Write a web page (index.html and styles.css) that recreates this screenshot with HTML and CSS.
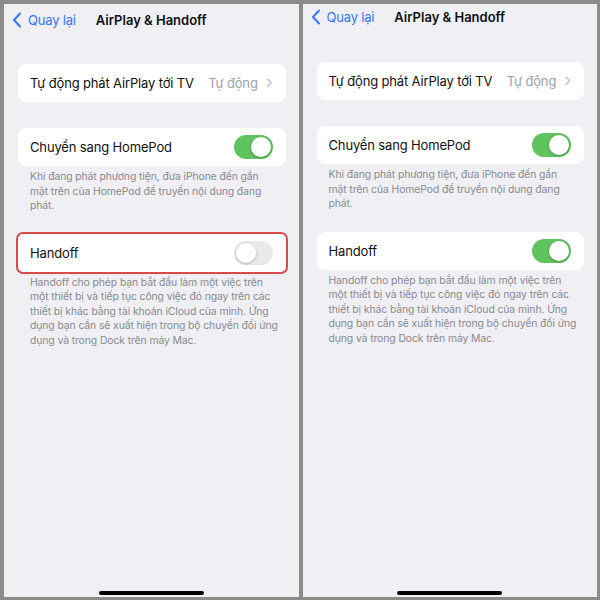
FILE: index.html
```html
<!DOCTYPE html>
<html lang="vi">
<head>
    <meta charset="UTF-8">
    <meta name="viewport" content="width=device-width, initial-scale=1.0">
    <title>AirPlay &amp; Handoff</title>
    <link rel="stylesheet" href="styles.css">
</head>
<body>
    <div class="compare">
        <!-- Before: Handoff off -->
        <div class="phone">
            <div class="nav">
                <a class="back">
                    <svg width="10" height="16" viewBox="0 0 10 16"><path d="M8 1.5 L2 8 L8 14.5" fill="none" stroke="#3478f6" stroke-width="2" stroke-linecap="round" stroke-linejoin="round"/></svg>
                    <span>Quay lại</span>
                </a>
                <div class="title">AirPlay &amp; Handoff</div>
            </div>

            <div class="cell">
                <span class="label">Tự động phát AirPlay tới TV</span>
                <span class="value">Tự động <span class="chev">›</span></span>
            </div>

            <div class="cell group">
                <span class="label">Chuyển sang HomePod</span>
                <span class="switch on"></span>
            </div>
            <p class="footer">Khi đang phát phương tiện, đưa iPhone đến gần mặt trên của HomePod để truyền nội dung đang phát.</p>

            <div class="cell group last marked">
                <span class="label">Handoff</span>
                <span class="switch"></span>
            </div>
            <p class="footer">Handoff cho phép bạn bắt đầu làm một việc trên một thiết bị và tiếp tục công việc đó ngay trên các thiết bị khác bằng tài khoản iCloud của mình. Ứng dụng bạn cần sẽ xuất hiện trong bộ chuyển đổi ứng dụng và trong Dock trên máy Mac.</p>

            <div class="home-bar"></div>
        </div>

        <!-- After: Handoff on -->
        <div class="phone raised">
            <div class="nav">
                <a class="back">
                    <svg width="10" height="16" viewBox="0 0 10 16"><path d="M8 1.5 L2 8 L8 14.5" fill="none" stroke="#3478f6" stroke-width="2" stroke-linecap="round" stroke-linejoin="round"/></svg>
                    <span>Quay lại</span>
                </a>
                <div class="title">AirPlay &amp; Handoff</div>
            </div>

            <div class="cell">
                <span class="label">Tự động phát AirPlay tới TV</span>
                <span class="value">Tự động <span class="chev">›</span></span>
            </div>

            <div class="cell group">
                <span class="label">Chuyển sang HomePod</span>
                <span class="switch on"></span>
            </div>
            <p class="footer">Khi đang phát phương tiện, đưa iPhone đến gần mặt trên của HomePod để truyền nội dung đang phát.</p>

            <div class="cell group last">
                <span class="label">Handoff</span>
                <span class="switch on"></span>
            </div>
            <p class="footer">Handoff cho phép bạn bắt đầu làm một việc trên một thiết bị và tiếp tục công việc đó ngay trên các thiết bị khác bằng tài khoản iCloud của mình. Ứng dụng bạn cần sẽ xuất hiện trong bộ chuyển đổi ứng dụng và trong Dock trên máy Mac.</p>

            <div class="home-bar"></div>
        </div>
    </div>
</body>
</html>
```

FILE: styles.css
```css
body {
    margin: 0;
    background-color: #8b8b88;
    font-family: 'Inter', 'Liberation Sans', sans-serif;
}

.compare {
    display: flex;
    gap: 4px;
    height: 600px;
    box-sizing: border-box;
    padding: 4px 3px 3px 4px;
}

.phone {
    flex: 1;
    display: flex;
    flex-direction: column;
    background-color: #efeff4;
}

.nav {
    position: relative;
    height: 32px;
    display: flex;
    align-items: center;
    justify-content: center;
    margin-bottom: 28px;
}

.raised .nav {
    height: 26px;
    margin-bottom: 32px;
}

.back {
    position: absolute;
    left: 8px;
    top: 8px;
    display: flex;
    align-items: center;
    gap: 6px;
    color: #3478f6;
    font-size: 13px;
    letter-spacing: -0.2px;
}

.raised .back {
    top: 5px;
}

.title {
    font-size: 13px;
    font-weight: 600;
    color: #111;
}

.cell {
    display: flex;
    align-items: center;
    justify-content: space-between;
    height: 38px;
    margin: 0 13px 0 14px;
    padding: 0 13px 0 12px;
    background-color: #fff;
    border-radius: 8px;
    font-size: 13px;
    letter-spacing: -0.15px;
    color: #111;
}

.cell.group {
    margin-top: 26px;
}

.cell.last {
    margin-top: 20px;
}

.cell.marked {
    outline: 2px solid #d94b4b;
    outline-offset: 0;
    border-radius: 5px;
}

.value {
    color: #a1a1a6;
    display: flex;
    align-items: center;
    gap: 8px;
}

.chev {
    color: #c4c4c7;
    font-size: 18px;
    line-height: 1;
    margin-top: -2px;
}

.switch {
    position: relative;
    width: 39px;
    height: 24px;
    border-radius: 12px;
    background-color: #e9e9eb;
}

.switch::after {
    content: "";
    position: absolute;
    top: 2px;
    left: 2px;
    width: 20px;
    height: 20px;
    border-radius: 50%;
    background-color: #fff;
    box-shadow: 0 1px 3px rgba(0, 0, 0, 0.25);
}

.switch.on {
    background-color: #5fc35f;
}

.switch.on::after {
    left: 17px;
}

.footer {
    margin: 4px 20px 0 26px;
    font-size: 10.4px;
    letter-spacing: -0.1px;
    line-height: 14.5px;
    color: #8a8a8e;
}

.home-bar {
    width: 105px;
    height: 4px;
    margin: auto auto 2px;
    border-radius: 3px;
    background-color: #000;
}
```
